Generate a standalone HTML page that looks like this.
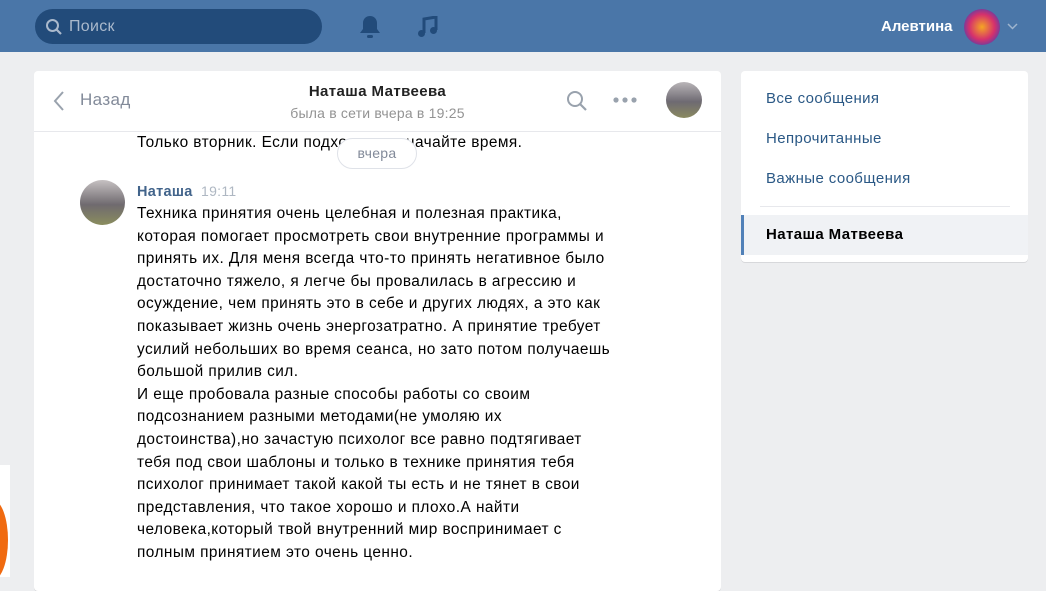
<!DOCTYPE html>
<html><head><meta charset="utf-8"><style>
*{margin:0;padding:0;box-sizing:border-box}
body{width:1046px;height:577px;overflow:hidden;background:#edeef0;font-family:"Liberation Sans","Noto Sans CJK SC",sans-serif;position:relative}
.top{position:absolute;left:0;top:0;width:1046px;height:52px;background:#4a76a8}
.search{position:absolute;left:35px;top:9px;width:287px;height:35px;border-radius:18px;background:#224b7a;color:#aab9cc;font-size:16px;line-height:35px;padding-left:34px;letter-spacing:0.3px}
.panel{position:absolute;left:34px;top:71px;width:687px;height:520px;background:#fff;border-radius:4px;box-shadow:0 1px 0 #d7d8db}
.hdr{height:61px;border-bottom:1px solid #e7e8ec;position:relative}
.abs{position:absolute}
.msg{position:absolute;left:103px;font-size:15.4px;line-height:22.6px;color:#000;width:560px;letter-spacing:0.45px}
.side{position:absolute;left:741px;top:71px;width:287px;height:191px;background:#fff;border-radius:4px;box-shadow:0 1px 0 #d7d8db}
.side div{position:absolute;left:25px;font-size:15px;color:#2a5885;letter-spacing:0.4px}
</style></head><body>
<div class="top">
 <div class="search">Поиск
  <svg class="abs" style="left:10px;top:9px" width="18" height="18" viewBox="0 0 18 18"><circle cx="7.5" cy="7.5" r="5.5" stroke="#aab9cc" stroke-width="2" fill="none"/><path d="M11.5 11.5 16 16" stroke="#aab9cc" stroke-width="2.2"/></svg>
 </div>
 <svg class="abs" style="left:358px;top:14px" width="24" height="26" viewBox="0 0 24 26"><path d="M12 2c-4 0-7 3-7 7v6l-3 4h20l-3-4V9c0-4-3-7-7-7z" fill="#224b7a"/><rect x="9" y="21" width="6" height="3" rx="1.5" fill="#224b7a"/></svg>
 <svg class="abs" style="left:417px;top:16px" width="22" height="22" viewBox="0 0 22 22"><path d="M7 17V3l12-2v13" stroke="#224b7a" stroke-width="3" fill="none"/><circle cx="4.5" cy="17.5" r="3.5" fill="#224b7a"/><circle cx="16.5" cy="14.5" r="3.5" fill="#224b7a"/></svg>
 <div class="abs" style="left:881px;top:18px;color:#fff;font-weight:bold;font-size:15px">Алевтина</div>
 <div class="abs" style="left:964px;top:9px;width:36px;height:36px;border-radius:50%;background:radial-gradient(circle at 50% 50%,#f5a623,#d5306d 50%,#5a3fa8 80%,#2f7fd6)"></div>
 <svg class="abs" style="left:1007px;top:23px" width="11" height="7" viewBox="0 0 11 7"><path d="M1 1l4.5 4.5L10 1" stroke="#9fb5ce" stroke-width="1.5" fill="none"/></svg>
</div>
<div class="abs" style="left:0;top:465px;width:10px;height:112px;background:#fff"></div>
<div class="abs" style="left:-22px;top:500px;width:30px;height:80px;border-radius:50%;background:#f06a10"></div>
<div class="panel">
 <div class="hdr">
  <svg class="abs" style="left:18px;top:19px" width="14" height="22" viewBox="0 0 14 22"><path d="M11 2 3 11l8 9" stroke="#99a2ad" stroke-width="2" fill="none"/></svg>
  <div class="abs" style="left:46px;top:19px;font-size:17px;color:#828a99;letter-spacing:0.4px">Назад</div>
  <div class="abs" style="left:0;width:687px;text-align:center;top:12px;font-size:15px;font-weight:bold;color:#222;letter-spacing:0.4px">Наташа Матвеева</div>
  <div class="abs" style="left:0;width:687px;text-align:center;top:34px;font-size:14px;color:#939393;letter-spacing:0.2px">была в сети вчера в 19:25</div>
  <svg class="abs" style="left:532px;top:19px" width="22" height="22" viewBox="0 0 22 22"><circle cx="9" cy="9" r="7" stroke="#99a2ad" stroke-width="2" fill="none"/><path d="M14 14l6 6" stroke="#99a2ad" stroke-width="2.2"/></svg>
  <svg class="abs" style="left:579px;top:26px" width="24" height="6"><circle cx="3" cy="3" r="2.6" fill="#99a2ad"/><circle cx="12" cy="3" r="2.6" fill="#99a2ad"/><circle cx="21" cy="3" r="2.6" fill="#99a2ad"/></svg>
  <div class="abs" style="left:632px;top:11px;width:36px;height:36px;border-radius:50%;background:linear-gradient(#b9b5b8,#6e6a72 55%,#8a8a60)"></div>
 </div>
 <div class="msg" style="top:61px">Только вторник. Если подходит, назначайте время.</div>
 <div class="abs" style="left:303px;top:67px;width:80px;height:31px;border-radius:16px;background:#fff;border:1px solid #dfe2e8;text-align:center;line-height:29px;font-size:14px;color:#828a99;letter-spacing:0.3px">вчера</div>
 <div class="abs" style="left:46px;top:109px;width:45px;height:45px;border-radius:50%;background:linear-gradient(#c6c1c2,#6f6a6f 55%,#8a8d5e)"></div>
 <div class="abs" style="left:103px;top:112px;font-size:14.5px;font-weight:bold;color:#42648b;letter-spacing:0.3px">Наташа <span style="font-weight:normal;color:#aeb7c2;font-size:14px;margin-left:4px">19:11</span></div>
 <div class="msg" style="top:132px">Техника принятия очень целебная и полезная практика,<br>которая помогает просмотреть свои внутренние программы и<br>принять их. Для меня всегда что-то принять негативное было<br>достаточно тяжело, я легче бы провалилась в агрессию и<br>осуждение, чем принять это в себе и других людях, а это как<br>показывает жизнь очень энергозатратно. А принятие требует<br>усилий небольших во время сеанса, но зато потом получаешь<br>большой прилив сил.<br>И еще пробовала разные способы работы со своим<br>подсознанием разными методами(не умоляю их<br>достоинства),но зачастую психолог все равно подтягивает<br>тебя под свои шаблоны и только в технике принятия тебя<br>психолог принимает такой какой ты есть и не тянет в свои<br>представления, что такое хорошо и плохо.А найти<br>человека,который твой внутренний мир воспринимает с<br>полным принятием это очень ценно.</div>
</div>
<div class="side">
 <div style="top:19px">Все сообщения</div>
 <div style="top:59px">Непрочитанные</div>
 <div style="top:99px">Важные сообщения</div>
 <span class="abs" style="left:19px;top:135px;width:250px;height:1px;background:#e7e8ec"></span>
 <span class="abs" style="left:0;top:144px;width:287px;height:40px;background:#f0f2f5;border-left:3px solid #5181b8"></span>
 <div style="top:155px;color:#000;font-weight:bold">Наташа Матвеева</div>
</div>
</body></html>
